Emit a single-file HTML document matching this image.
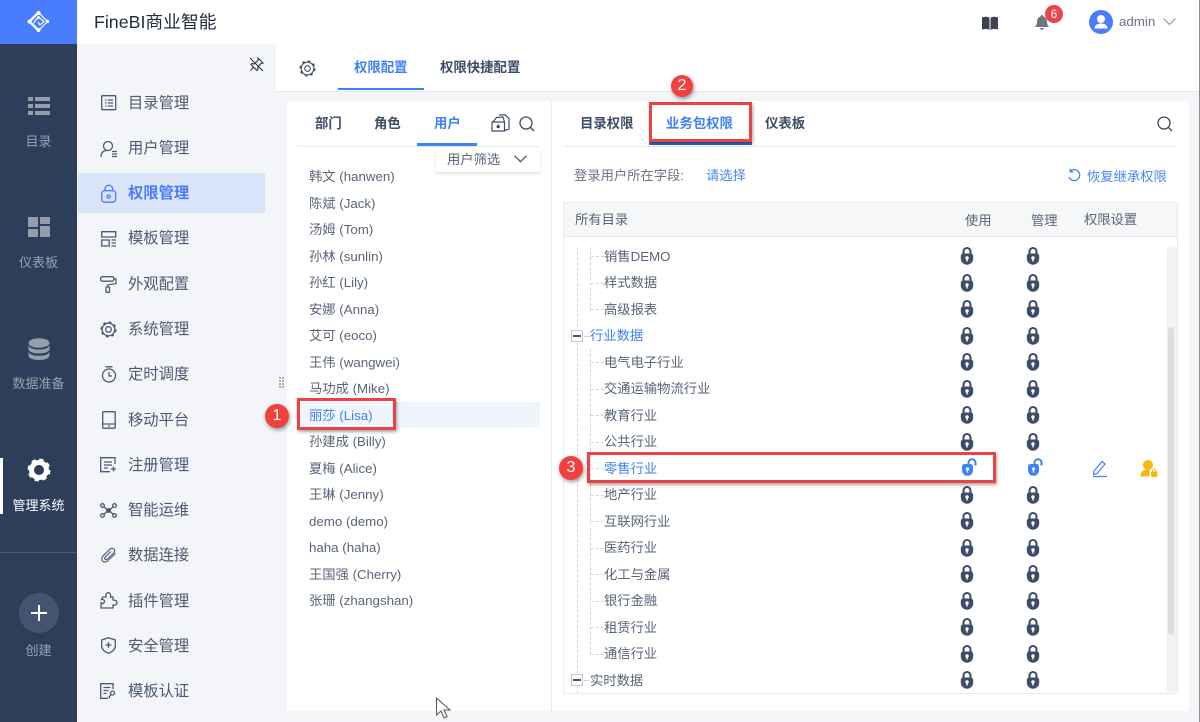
<!DOCTYPE html>
<html lang="zh"><head><meta charset="utf-8"><title>FineBI</title>
<style>
*{box-sizing:border-box}
html,body{margin:0;padding:0;width:1200px;height:722px;overflow:hidden;background:#fff}
body{position:relative;font-family:"Liberation Sans","Noto Sans CJK SC",sans-serif;color:#3d4d66}
.t{position:absolute;white-space:nowrap;line-height:20px;height:20px}
.side{color:#98a1af;font-size:13px;text-align:center;width:77px;left:0}
.nav{left:128px;font-size:15.3px;color:#4b5a72;margin-top:1px}
.ic{position:absolute;fill:none;stroke:#4b5a72;stroke-width:1.3}
.u{left:309px;font-size:13.3px;color:#59657a;margin-top:1px}
.r{left:604px;font-size:13.3px;color:#59657a;margin-top:1px}
.tab{font-size:13.4px;font-weight:bold;color:#3d4d66}
.blue{color:#3d83f5}
.box{position:absolute;border:3px solid #ec4243;box-shadow:1px 2px 3px rgba(0,0,0,.35)}
.num{position:absolute;border-radius:50%;background:#f2403f;color:#fff;font-size:16px;text-align:center;box-shadow:1px 2px 4px rgba(0,0,0,.4)}
.dv{position:absolute;border-left:1px dashed #d3d6dc;width:0}
.dh{position:absolute;border-top:1px dashed #d3d6dc;height:0;width:13px;left:591px}
</style></head><body>
<svg width="0" height="0" style="position:absolute"><defs>
<g id="lk"><path d="M3.500 7V4.500a3.500 3.500 0 0 1 7 0V7" fill="none" stroke="#3d4d66" stroke-width="2.100"/><path d="M.8 9a2.500 2.500 0 0 1 2.500-2.500h7.400A2.500 2.500 0 0 1 13.200 9v2.500a6.200 6.200 0 0 1-12.400 0z" fill="#3d4d66"/><circle cx="7" cy="11" r="1.700" fill="#fff"/><path d="M6.300 11.500h1.400v3H6.300z" fill="#fff"/></g>
<g id="ul"><path d="M6.500 6V3.700a3.500 3.500 0 0 1 7 0V6.500" fill="none" stroke="#3d83f5" stroke-width="2"/><path d="M0 7.500a2.500 2.500 0 0 1 2.500-2.500h6A2.500 2.500 0 0 1 11 7.500v3.800a5.500 5.500 0 0 1-11 0z" fill="#3d83f5"/><circle cx="5.500" cy="10" r="1.600" fill="#fff"/><path d="M4.900 10.500h1.200v3H4.900z" fill="#fff"/></g>
</defs></svg>

<!-- Left dark rail -->
<div style="position:absolute;left:0;top:0;width:77px;height:722px;background:#2c3e5a"></div>
<div style="position:absolute;left:0;top:0;width:77px;height:44px;background:#4a7dfd"></div>
<svg style="position:absolute;left:27px;top:10px" width="23" height="23" viewBox="0 0 23 23"><path d="M11 3 2.500 11.500 11 20" fill="none" stroke="#fff" stroke-width="2.400"/><path d="M12 3l8.500 8.500L12 20M6.500 13l5-6 5.500 4.500-4 3.500-2-3" fill="none" stroke="#fff" stroke-width="1.200"/><g fill="#fff"><circle cx="11.500" cy="3" r="2.100"/><circle cx="2.500" cy="11.500" r="2"/><circle cx="11.500" cy="20" r="2.100"/><circle cx="20.500" cy="11.500" r="1.700"/><circle cx="11.500" cy="7.500" r="1.400"/></g></svg>
<svg style="position:absolute;left:28px;top:96px" width="22" height="19"><g fill="#949dac"><rect x="0" y="1" width="5" height="4"/><rect x="7" y="1" width="15" height="4"/><rect x="0" y="8" width="5" height="4"/><rect x="7" y="8" width="15" height="4"/><rect x="0" y="15" width="5" height="4"/><rect x="7" y="15" width="15" height="4"/></g></svg>
<div class="t side" style="top:132px">目录</div>
<svg style="position:absolute;left:28px;top:217px" width="22" height="20"><g fill="#949dac"><rect x="0" y="0" width="10" height="10"/><rect x="12" y="0" width="10" height="7"/><rect x="0" y="12" width="10" height="8"/><rect x="12" y="9" width="10" height="11"/></g></svg>
<div class="t side" style="top:253px">仪表板</div>
<svg style="position:absolute;left:28px;top:338px" width="22" height="22"><g fill="#949dac"><ellipse cx="11" cy="5" rx="10.500" ry="4.800"/><path d="M.5 7.500c2 3 5 4 10.500 4s8.500-1 10.500-4v3.500c0 3-5 4.500-10.500 4.500S.5 14 .5 11z"/><path d="M.5 14c2 3 5 3.800 10.500 3.800S19.500 17 21.500 14v3.500C21.500 20.500 16.500 22 11 22S.5 20.500.5 17.500z"/></g></svg>
<div class="t side" style="top:374px">数据准备</div>
<div style="position:absolute;left:0;top:458px;width:3px;height:56px;background:#fff"></div>
<svg style="position:absolute;left:27px;top:458px" width="24" height="24" viewBox="0 0 24 24"><circle cx="12" cy="12" r="7.500" fill="none" stroke="#fff" stroke-width="5"/><circle cx="12" cy="12" r="10" fill="none" stroke="#fff" stroke-width="3" stroke-dasharray="4.200 3.650"/></svg>
<div class="t side" style="top:496px;color:#fff">管理系统</div>
<div style="position:absolute;left:0;top:552px;width:77px;height:1px;background:#4b5a72"></div>
<div style="position:absolute;left:19px;top:593px;width:40px;height:40px;border-radius:50%;background:#45546e"></div>
<div style="position:absolute;left:31px;top:612px;width:16px;height:2px;background:#fff"></div>
<div style="position:absolute;left:38px;top:605px;width:2px;height:16px;background:#fff"></div>
<div class="t side" style="top:641px">创建</div>

<!-- Top bar -->
<div class="t" style="left:94px;top:12px;font-size:17.800px;color:#222d3d">FineBI商业智能</div>
<svg style="position:absolute;left:982px;top:16px" width="16" height="14"><path d="M0 1.500C3 .5 6 .5 7.500 2v12C6 12.800 3 12.800 0 13.500zM16 1.500C13 .5 10 .5 8.500 2v12c1.500-1.200 4.500-1.200 7.500-.5z" fill="#3d4450"/></svg>
<svg style="position:absolute;left:1035px;top:15px" width="15" height="15"><path d="M7 0c1 0 1.300.6 1.400 1.500C11 2.300 12 4.500 12 7c0 2 .8 3.500 2 5H0c1.200-1.500 2-3 2-5 0-2.500 1-4.700 3.600-5.500C5.700.6 6 0 7 0zM5 13h4c0 1-.9 1.700-2 1.700S5 14 5 13z" fill="#6f7680"/></svg>
<div style="position:absolute;left:1045px;top:5px;width:18px;height:18px;border-radius:50%;background:#e8474a;color:#fff;font-size:12px;line-height:18px;text-align:center">6</div>
<div style="position:absolute;left:1089px;top:10px;width:24px;height:24px;border-radius:50%;background:#4a7dfd"></div>
<svg style="position:absolute;left:1089px;top:10px" width="24" height="24"><circle cx="12" cy="9" r="4" fill="#fff"/><path d="M5.500 18.500c0-3.500 3-5 6.500-5s6.500 1.500 6.500 5z" fill="#fff"/></svg>
<div class="t" style="left:1119px;top:12px;font-size:13.300px;color:#6b7280">admin</div>
<svg style="position:absolute;left:1163px;top:18px" width="13" height="8"><path d="M.5.500l6 6 6-6" fill="none" stroke="#8a92a0"/></svg>

<!-- Secondary nav -->
<div style="position:absolute;left:77px;top:44px;width:199px;height:678px;background:#f3f5f9"></div>
<svg style="position:absolute;left:249px;top:57px" width="15" height="15" viewBox="0 0 15 15"><path d="M9 1l5 5-2 .500-3.500 4 .5 2-1 1-6-6 1-1 2 .5 4-3.500zM5 10l-3.500 3.500M1 1l13 13" fill="none" stroke="#2d3644" stroke-width="1.100"/></svg>
<div style="position:absolute;left:78px;top:173px;width:187px;height:40px;background:#d9e4f8"></div>

<svg class="ic" style="left:101px;top:95px" width="16" height="16"><rect x=".7" y=".7" width="14" height="14" rx="1"/><path d="M4 5h1.500M7 5h5M4 8h1.500M7 8h5M4 11h1.500M7 11h5"/></svg>
<div class="t nav" style="top:93px">目录管理</div>
<svg class="ic" style="left:100px;top:140px" width="18" height="18"><circle cx="8" cy="6" r="4.500"/><path d="M1 17c0-4 2-6 5-6.500M12 11.500h5M12 14h5M12 16.500h5"/></svg>
<div class="t nav" style="top:138px">用户管理</div>
<svg class="ic" style="left:101px;top:184px;stroke:#4a7dfd" width="16" height="19"><rect x=".7" y="6.700" width="14" height="11.500" rx="3"/><path d="M4 6.500V5a3.800 3.800 0 0 1 7.600 0v1.500"/><circle cx="7.700" cy="12.500" r="1.600"/></svg>
<div class="t nav" style="top:183px;color:#4a7dfd;font-weight:bold">权限管理</div>
<svg class="ic" style="left:101px;top:231px" width="16" height="16"><path d="M.7 6V.7h14V6zM.7 9h7.500v6H.7zM10.500 9H15M10.500 12H15M10.500 15H15"/></svg>
<div class="t nav" style="top:228px">模板管理</div>
<svg class="ic" style="left:100px;top:276px" width="17" height="17"><rect x=".7" y=".7" width="13" height="4.500" rx="1.500"/><path d="M14 3h2v4.500L7.500 9v2"/><rect x="6" y="11" width="3.500" height="5.300" rx=".5"/></svg>
<div class="t nav" style="top:274px">外观配置</div>
<svg class="ic" style="left:100px;top:321px" width="17" height="17" viewBox="0 0 17 17"><circle cx="8.500" cy="8.500" r="6.300"/><circle cx="8.500" cy="8.500" r="7.300" stroke-width="1.600" stroke-dasharray="2.600 3.130"/><circle cx="8.500" cy="8.500" r="2.800"/></svg>
<div class="t nav" style="top:319px">系统管理</div>
<svg class="ic" style="left:101px;top:366px" width="16" height="17"><circle cx="8" cy="9.500" r="6.500"/><path d="M4.500.8h7M8 6v4h3"/></svg>
<div class="t nav" style="top:364px">定时调度</div>
<svg class="ic" style="left:102px;top:411px" width="14" height="18"><rect x=".7" y=".7" width="12.500" height="16.500" rx="1"/><path d="M.7 13h12.500M6 15h2"/></svg>
<div class="t nav" style="top:410px">移动平台</div>
<svg class="ic" style="left:100px;top:457px" width="17" height="16"><path d="M15 7V.7H.7v14H10M4 5h8M4 8h8M4 11h4M11 12h5M13.500 9.500v5"/></svg>
<div class="t nav" style="top:455px">注册管理</div>
<svg class="ic" style="left:100px;top:503px" width="17" height="15"><circle cx="2.500" cy="2.500" r="1.800"/><circle cx="14.500" cy="2.500" r="1.800"/><circle cx="2.500" cy="12.500" r="1.800"/><circle cx="14.500" cy="12.500" r="1.800"/><circle cx="8.500" cy="7.500" r="1.800" fill="#4b5a72"/><path d="M4 4l3 2.500M13 4l-3 2.500M4 11l3-2.500M13 11l-3-2.500"/></svg>
<div class="t nav" style="top:500px">智能运维</div>
<svg class="ic" style="left:101px;top:547px;stroke-width:1.100" width="16" height="16" viewBox="0 0 16 16"><path d="M14.500 6.500 7 13.500c-1.800 1.800-4.300 1.800-5.500.5s-1-3.500.8-5.300L8.500 2.500c1.500-1.500 3.500-1.500 4.500-.5s1 2.800-.4 4.200L6.500 12c-.8.800-2 .800-2.500.2s-.4-1.500.3-2.200L10 4.500"/></svg>
<div class="t nav" style="top:545px">数据连接</div>
<svg class="ic" style="left:100px;top:592px" width="18" height="17"><path d="M1 16v-5c2 1 3.500 0 3.500-1.500S3 7 1.500 7.500L3 5h3c-.5-3 1-4.500 2.500-4.300S11 2.500 10.500 5H13l0 3c2 0 4 .5 4 2.500S15 13.500 13 13v3z"/></svg>
<div class="t nav" style="top:591px">插件管理</div>
<svg class="ic" style="left:101px;top:637px" width="15" height="17"><path d="M7.500.7l6.800 2.300v6c0 3.500-3 5.800-6.800 7.300C3.700 14.800.7 12.500.7 9V3zM4.500 8h6M7.500 5v6"/></svg>
<div class="t nav" style="top:636px">安全管理</div>
<svg class="ic" style="left:100px;top:683px" width="17" height="16"><path d="M13 6V.7H.7v14.600H8M3.500 4.500h7M3.500 7.500h5M3.500 10.500h3"/><circle cx="12.500" cy="10" r="2"/><path d="M11 11.500l-2 2.500 1 1"/></svg>
<div class="t nav" style="top:681px">模板认证</div>

<!-- Main tabs bar -->
<div style="position:absolute;left:276px;top:44px;width:923px;height:47px;background:#fff"></div>
<div style="position:absolute;left:276px;top:91px;width:923px;height:631px;background:#f3f5f9"></div>
<div style="position:absolute;left:276px;top:91px;width:923px;height:1px;background:#e6e8ec"></div>
<div style="position:absolute;left:1199px;top:0;width:1px;height:722px;background:#8d8d8d"></div>
<svg class="ic" style="left:299px;top:60px;stroke:#3d4d66;stroke-width:1.100" width="17" height="17" viewBox="0 0 17 17"><circle cx="8.500" cy="8.500" r="6.300"/><circle cx="8.500" cy="8.500" r="7.300" stroke-width="1.600" stroke-dasharray="2.600 3.130"/><circle cx="8.500" cy="8.500" r="2.800"/></svg>
<div class="t tab blue" style="left:354px;top:58px">权限配置</div>
<div class="t tab" style="left:440px;top:58px">权限快捷配置</div>
<div style="position:absolute;left:338px;top:88px;width:86px;height:2px;background:#3d83f5"></div>

<!-- Left panel -->
<div style="position:absolute;left:287px;top:101px;width:264px;height:610px;background:#fff"></div>
<div class="t tab" style="left:315px;top:114px">部门</div>
<div class="t tab" style="left:374px;top:114px">角色</div>
<div class="t tab blue" style="left:434px;top:114px">用户</div>
<div style="position:absolute;left:298px;top:146px;width:242px;height:1px;background:#e8eaee"></div>
<div style="position:absolute;left:417px;top:143px;width:60px;height:3px;background:#3d83f5"></div>
<svg class="ic" style="left:491px;top:114px;stroke:#3d4d66;stroke-width:1.200" width="19" height="18"><path d="M1 8h12.500v9H1zM2 8l3.500-4.500L12 3l1.500 5M8 1l6-.3 4 3.700V15l-4.500 1.500"/><path d="M7.200 10l1.800 2.500a1.800 1.800 0 1 1-3.600 0z" fill="#3d4d66" stroke="none"/></svg>
<svg class="ic" style="left:519px;top:116px;stroke:#3d4d66;stroke-width:1.300" width="16" height="16"><circle cx="7" cy="7" r="6"/><path d="M11.500 11.500l3.500 3.500"/></svg>
<div style="position:absolute;left:436px;top:147px;width:104px;height:25px;background:#fff;box-shadow:0 2px 3px rgba(0,0,0,.12)"></div>
<div class="t" style="left:447px;top:150px;font-size:13.300px;color:#59657a">用户筛选</div>
<svg style="position:absolute;left:514px;top:155px" width="13" height="8"><path d="M.5.700l6 6 6-6" fill="none" stroke="#3d4d66" stroke-width="1.100"/></svg>

<div style="position:absolute;left:298px;top:402px;width:242px;height:26px;background:#eff4fd"></div>
<div class="t u" style="top:166px">韩文 (hanwen)</div>
<div class="t u" style="top:193px">陈斌 (Jack)</div>
<div class="t u" style="top:219px">汤姆 (Tom)</div>
<div class="t u" style="top:246px">孙林 (sunlin)</div>
<div class="t u" style="top:272px">孙红 (Lily)</div>
<div class="t u" style="top:299px">安娜 (Anna)</div>
<div class="t u" style="top:325px">艾可 (eoco)</div>
<div class="t u" style="top:352px">王伟 (wangwei)</div>
<div class="t u" style="top:378px">马功成 (Mike)</div>
<div class="t u" style="top:405px;color:#3d83f5">丽莎 (Lisa)</div>
<div class="t u" style="top:431px">孙建成 (Billy)</div>
<div class="t u" style="top:458px">夏梅 (Alice)</div>
<div class="t u" style="top:484px">王琳 (Jenny)</div>
<div class="t u" style="top:511px">demo (demo)</div>
<div class="t u" style="top:537px">haha (haha)</div>
<div class="t u" style="top:564px">王国强 (Cherry)</div>
<div class="t u" style="top:590px">张珊 (zhangshan)</div>

<!-- Splitter handles -->
<svg style="position:absolute;left:279px;top:377px" width="6" height="13"><g fill="#a9aeb8"><path d="M0 0h2v2H0zM3 0h2v2H3zM0 3h2v2H0zM3 3h2v2H3zM0 6h2v2H0zM3 6h2v2H3zM0 9h2v2H0zM3 9h2v2H3z"/></g></svg>
<svg style="position:absolute;left:554px;top:400px" width="6" height="13"><g fill="#a9aeb8"><path d="M0 0h2v2H0zM3 0h2v2H3zM0 3h2v2H0zM3 3h2v2H3zM0 6h2v2H0zM3 6h2v2H3zM0 9h2v2H0zM3 9h2v2H3z"/></g></svg>

<!-- Right panel -->
<div style="position:absolute;left:552px;top:101px;width:637px;height:610px;background:#fff"></div>
<div style="position:absolute;left:551px;top:101px;width:1px;height:610px;background:#e8eaee"></div>
<div class="t tab" style="left:580px;top:114px">目录权限</div>
<div class="t tab blue" style="left:666px;top:114px">业务包权限</div>
<div class="t tab" style="left:765px;top:114px">仪表板</div>
<div style="position:absolute;left:563px;top:146px;width:615px;height:1px;background:#e8eaee"></div>
<div style="position:absolute;left:649px;top:142px;width:103px;height:3px;background:#2f6fd0"></div>
<svg class="ic" style="left:1157px;top:116px;stroke:#3d4d66;stroke-width:1.300" width="16" height="16"><circle cx="7" cy="7" r="6"/><path d="M11.500 11.500l3.500 3.500"/></svg>
<div class="t" style="left:574px;top:166px;font-size:13.300px;color:#6b7687">登录用户所在字段:</div>
<div class="t blue" style="left:706px;top:166px;font-size:13.300px;color:#4a86f5">请选择</div>
<svg class="ic" style="left:1067px;top:168px;stroke:#3d83f5;stroke-width:1.300" width="14" height="14"><path d="M3 3.500A5.500 5.500 0 1 1 2 9M3.200.8v3h3"/></svg>
<div class="t" style="left:1087px;top:167px;font-size:13.300px;color:#4a86f5">恢复继承权限</div>

<!-- Table -->
<div style="position:absolute;left:563px;top:202px;width:615px;height:492px;border:1px solid #e8eaee;background:#fff"></div>
<div style="position:absolute;left:564px;top:203px;width:613px;height:34px;background:#f6f7f9;border-bottom:1px solid #e8eaee"></div>
<div class="t" style="left:575px;top:210px;font-size:13.300px;color:#59657a">所有目录</div>
<div class="t" style="left:965px;top:211px;font-size:13.300px;color:#59657a">使用</div>
<div class="t" style="left:1031px;top:211px;font-size:13.300px;color:#59657a">管理</div>
<div class="t" style="left:1084px;top:210px;font-size:13.300px;color:#59657a">权限设置</div>
<div style="position:absolute;left:1166px;top:247px;width:11px;height:446px;border-radius:5px;background:#f3f3f4"></div>
<div style="position:absolute;left:1168px;top:327px;width:6px;height:308px;border-radius:3px;background:#dcdde1"></div>

<!-- Tree lines -->
<div class="dv" style="left:577px;top:247px;height:80px"></div>
<div class="dv" style="left:577px;top:343px;height:330px"></div>
<div class="dv" style="left:577px;top:686px;height:7px"></div>
<div class="dv" style="left:590px;top:247px;height:64px"></div>
<div class="dv" style="left:590px;top:349px;height:306px"></div>
<div class="dh" style="top:256px"></div><div class="dh" style="top:283px"></div><div class="dh" style="top:309px"></div>
<div class="dh" style="top:362px"></div><div class="dh" style="top:389px"></div><div class="dh" style="top:415px"></div><div class="dh" style="top:442px"></div><div class="dh" style="top:468px"></div><div class="dh" style="top:495px"></div><div class="dh" style="top:521px"></div><div class="dh" style="top:548px"></div><div class="dh" style="top:574px"></div><div class="dh" style="top:601px"></div><div class="dh" style="top:627px"></div><div class="dh" style="top:654px"></div>
<div style="position:absolute;left:584px;top:336px;width:6px;border-top:1px dashed #d3d6dc"></div>
<div style="position:absolute;left:584px;top:680px;width:6px;border-top:1px dashed #d3d6dc"></div>
<div style="position:absolute;left:571px;top:330px;width:12px;height:12px;border:1px solid #c4c9d2;background:#fff"></div>
<div style="position:absolute;left:573px;top:335px;width:8px;height:2px;background:#4b5a72"></div>
<div style="position:absolute;left:571px;top:674px;width:12px;height:12px;border:1px solid #c4c9d2;background:#fff"></div>
<div style="position:absolute;left:573px;top:679px;width:8px;height:2px;background:#4b5a72"></div>

<!-- Rows -->
<div class="t r" style="top:246px">销售DEMO</div>
<div class="t r" style="top:272px">样式数据</div>
<div class="t r" style="top:299px">高级报表</div>
<div class="t r" style="left:590px;top:325px;color:#3d83f5">行业数据</div>
<div class="t r" style="top:352px">电气电子行业</div>
<div class="t r" style="top:378px">交通运输物流行业</div>
<div class="t r" style="top:405px">教育行业</div>
<div class="t r" style="top:431px">公共行业</div>
<div class="t r" style="top:458px;color:#3d83f5">零售行业</div>
<div class="t r" style="top:484px">地产行业</div>
<div class="t r" style="top:511px">互联网行业</div>
<div class="t r" style="top:537px">医药行业</div>
<div class="t r" style="top:564px">化工与金属</div>
<div class="t r" style="top:590px">银行金融</div>
<div class="t r" style="top:617px">租赁行业</div>
<div class="t r" style="top:643px">通信行业</div>
<div class="t r" style="left:590px;top:670px">实时数据</div>

<!-- Locks -->
<svg style="position:absolute;left:0;top:0" width="1200" height="722">
<use href="#lk" x="960" y="247"/><use href="#lk" x="1026" y="247"/>
<use href="#lk" x="960" y="274"/><use href="#lk" x="1026" y="274"/>
<use href="#lk" x="960" y="300"/><use href="#lk" x="1026" y="300"/>
<use href="#lk" x="960" y="327"/><use href="#lk" x="1026" y="327"/>
<use href="#lk" x="960" y="353"/><use href="#lk" x="1026" y="353"/>
<use href="#lk" x="960" y="380"/><use href="#lk" x="1026" y="380"/>
<use href="#lk" x="960" y="406"/><use href="#lk" x="1026" y="406"/>
<use href="#lk" x="960" y="433"/><use href="#lk" x="1026" y="433"/>
<use href="#ul" x="962" y="459"/><use href="#ul" x="1028" y="459"/>
<use href="#lk" x="960" y="486"/><use href="#lk" x="1026" y="486"/>
<use href="#lk" x="960" y="512"/><use href="#lk" x="1026" y="512"/>
<use href="#lk" x="960" y="539"/><use href="#lk" x="1026" y="539"/>
<use href="#lk" x="960" y="565"/><use href="#lk" x="1026" y="565"/>
<use href="#lk" x="960" y="592"/><use href="#lk" x="1026" y="592"/>
<use href="#lk" x="960" y="618"/><use href="#lk" x="1026" y="618"/>
<use href="#lk" x="960" y="645"/><use href="#lk" x="1026" y="645"/>
<use href="#lk" x="960" y="671"/><use href="#lk" x="1026" y="671"/>
<path d="M1094 471l8-9.500 3 2.500-8 9.500-3.500 1zM1093 476.500h14" fill="none" stroke="#3d83f5" stroke-width="1.200"/>
<circle cx="1148" cy="465" r="5" fill="#f5b80f"/><path d="M1140.500 476.500c0-5.500 3-7 7.500-7 2 0 3 .3 4 1v6z" fill="#f5b80f"/>
<rect x="1149.500" y="469.500" width="8.500" height="8" fill="#fff"/>
<rect x="1151" y="471.500" width="6.500" height="5.500" rx="1" fill="#f5b80f"/><path d="M1152.500 471.500v-1a1.700 1.700 0 0 1 3.400 0v1" fill="none" stroke="#f5b80f"/>
</svg>

<!-- Annotations -->
<div class="box" style="left:297px;top:398px;width:99px;height:32px"></div>
<div class="num" style="left:265px;top:404px;width:24px;height:24px;line-height:24px">1</div>
<div class="box" style="left:649px;top:102px;width:103px;height:40px"></div>
<div class="num" style="left:671px;top:75px;width:22px;height:22px;line-height:22px">2</div>
<div class="box" style="left:587px;top:452px;width:409px;height:31px"></div>
<div class="num" style="left:559px;top:456px;width:24px;height:24px;line-height:24px">3</div>

<!-- Cursor -->
<svg style="position:absolute;left:435px;top:697px" width="18" height="23"><path d="M1.500 1v17l4.500-4 3 7 3-1.500-3-6.500h6z" fill="#fff" stroke="#555" stroke-width="1"/></svg>
</body></html>
